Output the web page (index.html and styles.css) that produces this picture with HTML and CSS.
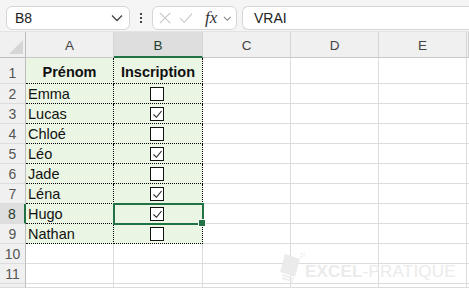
FILE: index.html
```html
<!DOCTYPE html>
<html>
<head>
<meta charset="utf-8">
<link rel="stylesheet" href="styles.css">
</head>
<body>
<div class="toolbar">
  <div class="namebox"><span class="nb-text">B8</span>
    <svg class="chev" width="12" height="8" viewBox="0 0 12 8"><path d="M1 1.5 L6 6.5 L11 1.5" fill="none" stroke="#444" stroke-width="1.3"/></svg>
  </div>
  <div class="dots"><i></i><i></i><i></i></div>
  <div class="fbtns">
    <svg width="14" height="14" viewBox="0 0 14 14"><path d="M1 1 L13 13 M13 1 L1 13" stroke="#c4c4c4" stroke-width="1.2"/></svg>
    <svg width="16" height="14" viewBox="0 0 16 14"><path d="M1 7 L6 12 L15 2" fill="none" stroke="#c4c4c4" stroke-width="1.2"/></svg>
    <span class="fx">fx</span>
    <svg class="chev2" width="10" height="7" viewBox="0 0 10 7"><path d="M1 1.5 L5 5.5 L9 1.5" fill="none" stroke="#888" stroke-width="1.2"/></svg>
  </div>
  <div class="formula">VRAI</div>
</div>
<div class="sheet">
  <div class="corner"><span class="tri"></span></div>
  <div class="ch">A</div><div class="ch sel">B</div><div class="ch">C</div><div class="ch">D</div><div class="ch">E</div><div class="ch last"></div>

  <div class="rh r1">1</div><div class="c g r1 bold dr db">Prénom</div><div class="c g r1 bold ctr dr2 db">Inscription</div><div class="c r1"></div><div class="c r1"></div><div class="c r1"></div><div class="c r1 last"></div>

  <div class="rh">2</div><div class="c g dr db">Emma</div><div class="c g ctr dr2 db"><span class="cb"></span></div><div class="c"></div><div class="c"></div><div class="c"></div><div class="c last"></div>
  <div class="rh">3</div><div class="c g dr db">Lucas</div><div class="c g ctr dr2 db"><span class="cb"><svg viewBox="0 0 12 12" width="12" height="12"><path d="M2.5 6.5 L5.5 9.3 L10.5 3" fill="none" stroke="#222" stroke-width="1.1"/></svg></span></div><div class="c"></div><div class="c"></div><div class="c"></div><div class="c last"></div>
  <div class="rh">4</div><div class="c g dr db">Chloé</div><div class="c g ctr dr2 db"><span class="cb"></span></div><div class="c"></div><div class="c"></div><div class="c"></div><div class="c last"></div>
  <div class="rh">5</div><div class="c g dr db">Léo</div><div class="c g ctr dr2 db"><span class="cb"><svg viewBox="0 0 12 12" width="12" height="12"><path d="M2.5 6.5 L5.5 9.3 L10.5 3" fill="none" stroke="#222" stroke-width="1.1"/></svg></span></div><div class="c"></div><div class="c"></div><div class="c"></div><div class="c last"></div>
  <div class="rh">6</div><div class="c g dr db">Jade</div><div class="c g ctr dr2 db"><span class="cb"></span></div><div class="c"></div><div class="c"></div><div class="c"></div><div class="c last"></div>
  <div class="rh">7</div><div class="c g dr db">Léna</div><div class="c g ctr dr2 db"><span class="cb"><svg viewBox="0 0 12 12" width="12" height="12"><path d="M2.5 6.5 L5.5 9.3 L10.5 3" fill="none" stroke="#222" stroke-width="1.1"/></svg></span></div><div class="c"></div><div class="c"></div><div class="c"></div><div class="c last"></div>
  <div class="rh rsel">8</div><div class="c g dr db">Hugo</div><div class="c g ctr dr2 db active"><span class="cb"><svg viewBox="0 0 12 12" width="12" height="12"><path d="M2.5 6.5 L5.5 9.3 L10.5 3" fill="none" stroke="#222" stroke-width="1.1"/></svg></span><span class="handle"></span></div><div class="c"></div><div class="c"></div><div class="c"></div><div class="c last"></div>
  <div class="rh">9</div><div class="c g dr db">Nathan</div><div class="c g ctr dr2 db"><span class="cb"></span></div><div class="c"></div><div class="c"></div><div class="c"></div><div class="c last"></div>
  <div class="rh">10</div><div class="c"></div><div class="c"></div><div class="c"></div><div class="c"></div><div class="c"></div><div class="c last"></div>
  <div class="rh">11</div><div class="c"></div><div class="c"></div><div class="c"></div><div class="c"></div><div class="c"></div><div class="c last"></div>
  <div class="rh"></div><div class="c"></div><div class="c"></div><div class="c"></div><div class="c"></div><div class="c"></div><div class="c last"></div>

  <div class="watermark">
    <svg class="wm-logo" width="30" height="32" viewBox="0 0 30 32">
      <path d="M7 3 L22 8 L17 26 L2 21 Z" fill="#ebebeb"/>
      <path d="M4 24 L16 28 M4 27 L15 30.5" stroke="#ebebeb" stroke-width="1.6"/>
      <circle cx="24" cy="3" r="1" fill="#ebebeb"/><circle cx="26" cy="5" r="1" fill="#ebebeb"/><circle cx="23" cy="6" r="0.9" fill="#ebebeb"/><circle cx="27" cy="2" r="0.8" fill="#ebebeb"/>
    </svg>
    <span class="wm-b">EXCEL</span><span class="wm-l">-PRATIQUE</span>
  </div>
</div>
</body>
</html>
```
FILE: styles.css
```css
html, body { margin: 0; padding: 0; }
body {
  width: 469px; height: 288px; overflow: hidden;
  background: #ffffff;
  font-family: "Liberation Sans", Arial, sans-serif;
  color: #111;
}
.toolbar {
  background: #f5f5f5;
  border-bottom: 1px solid #e3e3e3;
  display: flex;
  align-items: flex-start;
  padding: 6px 0 0 6px;
  box-sizing: border-box;
  height: 32px;
}
.namebox {
  width: 124px; height: 24px;
  box-sizing: border-box;
  background: #fff;
  border: 1px solid #d6d6d6;
  border-radius: 6px;
  display: flex; align-items: center; justify-content: space-between;
  padding: 0 6px 0 8px;
  font-size: 14px; color: #222;
}
.dots {
  width: 22px; height: 24px;
  display: flex; flex-direction: column; align-items: center; justify-content: center; gap: 2px;
}
.dots i { width: 2px; height: 2px; background: #444; display: block; }
.fbtns {
  width: 85px; height: 24px;
  box-sizing: border-box;
  background: #fff;
  border: 1px solid #d6d6d6;
  border-radius: 6px;
  display: flex; align-items: center;
  padding: 0 4px 0 6px; gap: 8px;
}
.fx {
  font-family: "Liberation Serif", serif; font-style: italic;
  font-size: 17px; color: #333; margin-left: 4px; margin-right: -4px;
}
.chev2 { margin-left: 2px; }
.formula {
  flex: 1; height: 24px; margin-left: 5px;
  box-sizing: border-box;
  background: #fff;
  border: 1px solid #d6d6d6; border-right: none;
  border-radius: 6px 0 0 6px;
  display: flex; align-items: center;
  padding-left: 11px;
  font-size: 14px; color: #222;
}
.sheet {
  position: relative;
  display: grid;
  grid-template-columns: 26px 88px 89px 88px 88px 88px 2px;
  grid-template-rows: 26px 26px repeat(10, 20px) 4px;
}
.corner, .ch, .rh {
  background: #f0f0f0;
  box-sizing: border-box;
  border-right: 1px solid #d4d4d4;
  border-bottom: 1px solid #c8c8c8;
  color: #444;
  font-size: 13.5px;
  display: flex; align-items: center; justify-content: center;
}
.corner { position: relative; border-right: 1px solid #bdbdbd; border-bottom: 1px solid #bdbdbd; }
.tri {
  position: absolute; right: 2px; bottom: 3px;
  width: 0; height: 0;
  border-left: 14px solid transparent;
  border-bottom: 14px solid #d6d6d6;
}
.ch { padding-top: 2px; }
.ch.sel { background: #dedede; border-bottom: 2px solid #217346; color: #1f3d2a; }
.rh {
  border-right: 1px solid #bdbdbd;
  border-bottom: 1px solid #dcdcdc;
  font-size: 14px; color: #555;
}
.rh.r1 { align-items: flex-end; padding-bottom: 2px; }
.rh.rsel { background: #dedede; border-right: 2px solid #217346; color: #1f3d2a; }
.c {
  box-sizing: border-box;
  border-right: 1px solid #dcdcdc;
  border-bottom: 1px solid #dcdcdc;
  font-size: 14.5px;
  display: flex; align-items: center;
  padding-left: 2px;
  position: relative;
  color: #111;
}
.c.g { background: #ebf5e4; }
.c.r1 { align-items: flex-end; padding-bottom: 3px; }
.bold { font-weight: bold; justify-content: center; padding-left: 0; }
.ctr { justify-content: center; padding-left: 0; }
.dr { border-right: 1px dotted #000; }
.dr2 { border-right: 1px dotted #000; }
.db { border-bottom: 1px dotted #000; }
.cb {
  width: 14px; height: 14px; box-sizing: border-box;
  border: 1px solid #111; background: #fff;
  display: block; margin-left: -2px;
}
.cb svg { display: block; }
.active { outline: 2px solid #217346; outline-offset: -1px; z-index: 2; }
.handle {
  position: absolute; right: -4px; bottom: -4px;
  width: 6px; height: 6px; background: #217346;
  border: 1px solid #fff; z-index: 3;
}
.watermark {
  position: absolute; left: 278px; top: 219px;
  display: flex; align-items: flex-end;
  font-size: 17px; letter-spacing: 0.2px;
  color: #ebebeb; pointer-events: none;
}
.wm-logo { margin-right: -3px; }
.wm-b { font-weight: bold; padding-bottom: 1px; }
.wm-l { font-weight: normal; padding-bottom: 1px; }
```
